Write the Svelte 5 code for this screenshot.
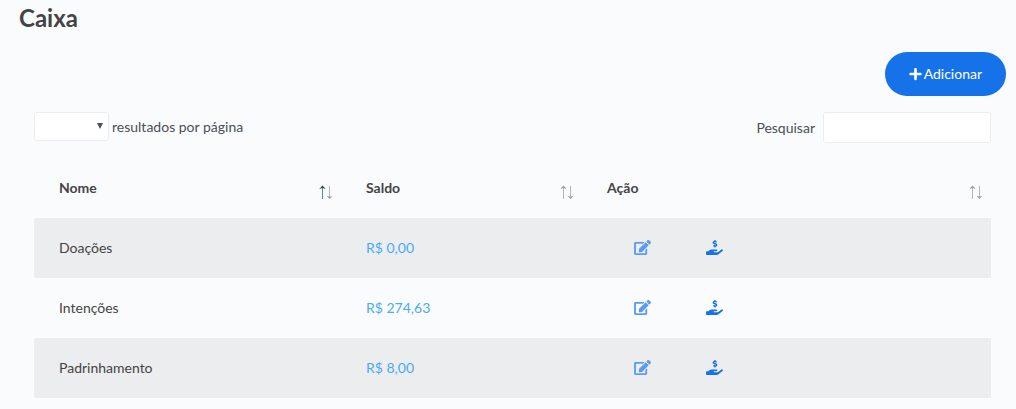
<script>
  const columns = [
    { label: 'Nome', sort: 'ascending' },
    { label: 'Saldo', sort: 'none' },
    { label: 'Ação', sort: 'none' }
  ];
  const rows = [
    { name: 'Doações', balance: 'R$ 0,00' },
    { name: 'Intenções', balance: 'R$ 274,63' },
    { name: 'Padrinhamento', balance: 'R$ 8,00' }
  ];
  let search = $state('');
  const visible = $derived(rows.filter((r) => r.name.toLowerCase().includes(search.toLowerCase())));
</script>

<main>
  <h1>Caixa</h1>
  <div class="toolbar">
    <button class="add" type="button">
      <svg width="13" height="14" viewBox="0 0 448 512" aria-hidden="true"><path fill="currentColor" d="M416 208H272V64c0-17.700-14.300-32-32-32h-32c-17.700 0-32 14.300-32 32v144H32c-17.700 0-32 14.300-32 32v32c0 17.700 14.300 32 32 32h144v144c0 17.700 14.300 32 32 32h32c17.700 0 32-14.300 32-32V304h144c17.700 0 32-14.300 32-32v-32c0-17.700-14.300-32-32-32z" /></svg>
      Adicionar
    </button>
  </div>

  <section>
    <div class="filters">
      <label class="length">
        <select><option value=""></option></select>
        resultados por página
      </label>
      <label class="search">
        Pesquisar
        <input type="search" bind:value={search} />
      </label>
    </div>

    <table>
      <colgroup><col class="name" /><col class="balance" /><col /></colgroup>
      <thead>
        <tr>
          {#each columns as column}
            <th aria-sort={column.sort}>
              <button type="button" class="sort" class:active={column.sort === 'ascending'}>
                {column.label}
                <svg width="14" height="16" viewBox="0 0 14 16" fill="none" aria-hidden="true">
                  <path class="up" d="M3.500 16V4" />
                  <path class="up-head" d="M3.500 2.500L6.800 6L3.500 5L.2 6z" />
                  <path class="down" d="M10.500 3V15" />
                  <path class="down-head" d="M10.500 16L13.500 12.800L10.500 13.800L7.500 12.800z" />
                </svg>
              </button>
            </th>
          {/each}
        </tr>
      </thead>
      <tbody>
        {#each visible as row}
          <tr>
            <td>{row.name}</td>
            <td class="money">{row.balance}</td>
            <td>
              <div class="actions">
                <button type="button" class="edit" aria-label="Editar">
                  <svg width="17" height="15" viewBox="0 0 576 512" aria-hidden="true"><path fill="currentColor" d="M402.6 83.2l90.2 90.2c3.8 3.8 3.8 10 0 13.8L274.4 405.6l-92.8 10.3c-12.4 1.4-22.9-9.1-21.5-21.500l10.3-92.800L388.8 83.2c3.8-3.8 10-3.8 13.800 0zm162-22.900l-48.800-48.800c-15.200-15.200-39.900-15.200-55.200 0l-35.400 35.400c-3.8 3.8-3.8 10 0 13.800l90.2 90.200c3.8 3.8 10 3.8 13.800 0l35.400-35.400c15.200-15.300 15.200-40 0-55.200zM384 346.200V448H64V128h229.800c3.200 0 6.200-1.300 8.500-3.500l40-40c7.600-7.600 2.200-20.500-8.500-20.500H48C21.500 64 0 85.500 0 112v352c0 26.500 21.500 48 48 48h352c26.500 0 48-21.500 48-48V306.200c0-10.700-12.900-16-20.500-8.500l-40 40c-2.200 2.300-3.500 5.300-3.500 8.500z" /></svg>
                </button>
                <button type="button" class="pay" aria-label="Movimentar saldo">
                  <svg width="17" height="15" viewBox="0 0 576 512" aria-hidden="true"><path fill="currentColor" d="M271.060 144.300l54.270 14.300a8.590 8.590 0 0 1 6.630 8.100c0 4.600-4.090 8.400-9.120 8.400h-35.600a30 30 0 0 1-11.190-2.200c-5.240-2.200-11.280-1.700-15.300 2l-19 17.500a11.680 11.680 0 0 0-2.250 2.660 11.420 11.420 0 0 0 3.880 15.740 83.770 83.770 0 0 0 34.510 11.500V240c0 8.800 7.830 16 17.370 16h17.370c9.550 0 17.380-7.200 17.380-16v-17.600c32.930-3.600 57.840-31 53.500-63-3.150-23-22.460-41.300-46.560-47.700L282.680 97.400a8.590 8.590 0 0 1-6.630-8.100c0-4.600 4.090-8.400 9.120-8.400h35.600A30 30 0 0 1 332 83.100c5.230 2.200 11.280 1.700 15.300-2l19-17.500A11.310 11.310 0 0 0 368.470 61a11.430 11.430 0 0 0-3.840-15.780 83.820 83.820 0 0 0-34.520-11.500V16c0-8.800-7.820-16-17.370-16h-17.370C285.820 0 278 7.200 278 16v17.600c-32.890 3.600-57.850 31-53.510 63 3.140 23 22.510 41.300 46.570 47.700zM565.270 328.100c-11.800-10.700-30.200-10-42.600 0L430.270 402a63.640 63.640 0 0 1-40 14H272a16 16 0 0 1 0-32h78.290c15.900 0 30.710-10.900 33.250-26.600a31.200 31.200 0 0 0 .46-5.460A32 32 0 0 0 352 320H192a117.660 117.660 0 0 0-74.100 26.290L71.400 384H16a16 16 0 0 0-16 16v96a16 16 0 0 0 16 16h356.770a64 64 0 0 0 40-14L564 377a32 32 0 0 0 1.280-48.900z" /></svg>
                </button>
              </div>
            </td>
          </tr>
        {/each}
      </tbody>
    </table>
  </section>
</main>

<style>
  :global(body) {
    background: #fafbfd;
    overflow-x: hidden;
  }
  main {
    padding: 4px 10px 10px 19px;
    font: 14px/20px Lato, sans-serif;
    color: #444;
  }
  h1 {
    margin: 0;
    font-size: 24px;
    line-height: 28px;
    font-weight: 700;
    color: #444;
  }
  button {
    font: inherit;
    color: inherit;
    border: 0;
    background: none;
    padding: 0;
    cursor: pointer;
  }
  svg {
    display: block;
  }
  .toolbar {
    display: flex;
    justify-content: flex-end;
    margin-top: 20px;
  }
  .add {
    display: flex;
    align-items: center;
    gap: 2px;
    padding: 12px 24px;
    border-radius: 22px;
    background: #1572e8;
    color: #fff;
  }
  section {
    padding: 16px 15px 0;
  }
  .filters {
    display: flex;
    justify-content: space-between;
    align-items: flex-start;
    color: #495057;
  }
  label {
    display: flex;
    align-items: center;
  }
  .length {
    gap: 3px;
  }
  .search {
    gap: 8px;
  }
  select,
  input {
    box-sizing: border-box;
    border: 1px solid #ebedf2;
    border-radius: 3px;
    background-color: #fff;
    font: inherit;
    color: inherit;
    appearance: none;
  }
  select {
    width: 75px;
    height: 29px;
    padding: 4px 16px 4px 8px;
    background-image: url("data:image/svg+xml,%3Csvg xmlns='http://www.w3.org/2000/svg' width='6' height='6'%3E%3Cpath d='M0 0h6L3 6z' fill='%23495057'/%3E%3C/svg%3E");
    background-repeat: no-repeat;
    background-position: right 5px top 10px;
  }
  input {
    width: 168px;
    height: 31px;
    padding: 4px 8px;
  }
  table {
    width: 100%;
    margin-top: 15px;
    border-collapse: collapse;
    table-layout: fixed;
  }
  .name {
    width: 307px;
  }
  .balance {
    width: 241px;
  }
  th,
  td {
    height: 60px;
    padding: 0 8px 0 25px;
    text-align: left;
  }
  .sort {
    display: flex;
    justify-content: space-between;
    align-items: flex-start;
    width: 100%;
    font-weight: 700;
  }
  .sort svg {
    margin-top: 5px;
    margin-bottom: -1px;
  }
  .up,
  .down {
    stroke: #b4b6b8;
  }
  .up-head,
  .down-head {
    fill: #999b9d;
  }
  .active .up {
    stroke: #5a83cc;
  }
  .active .up-head {
    fill: #3f4248;
  }
  tbody tr:nth-child(odd) {
    background: #ecedee;
  }
  .money {
    color: #48abf7;
  }
  .actions {
    display: flex;
    gap: 55px;
    padding: 0 0 2px 27px;
  }
  .edit {
    color: #5b9cf0;
  }
  .pay {
    color: #1572e8;
  }
</style>
